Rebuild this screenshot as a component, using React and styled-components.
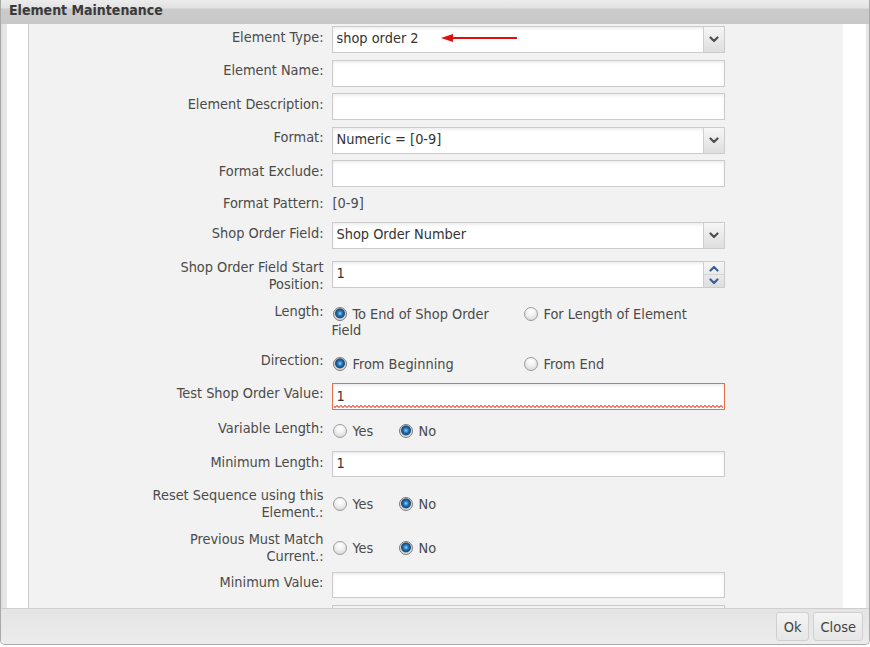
import React from "react";
import styled, { createGlobalStyle, css } from "styled-components";

const Global = createGlobalStyle`
  html, body { margin: 0; padding: 0; background: #ffffff; }
  body { font-family: "DejaVu Sans Condensed", "DejaVu Sans", sans-serif; }
  * { box-sizing: border-box; }
`;

const Dialog = styled.div`
  width: 870px;
  height: 645px;
  display: flex;
  flex-direction: column;
  border: 1px solid #a9a9a9;
  border-top: none;
  border-radius: 0 0 5px 5px;
  background: #e6e6e6;
  overflow: hidden;
`;

const TitleBar = styled.div`
  height: 24px;
  flex: none;
  padding-left: 8px;
  background: linear-gradient(#ececec 0, #e2e2e2 8px, #cbcbcb 9px, #c8c8c8 100%);
  font-weight: bold;
  font-size: 14px;
  line-height: 20px;
  color: #3a3a3a;
`;

const Body = styled.div`
  flex: none;
  height: 584px;
  padding: 0 3px 0 6px;
  background: linear-gradient(90deg, #d8d8d8 0, #e6e6e6 2px);
`;

const Frame = styled.div`
  height: 100%;
  background: #ffffff;
  padding: 0 23px 0 21px;
`;

const ScrollArea = styled.div`
  height: 100%;
  background: #f2f2f2;
  border-left: 1px solid #cdcdcd;
  overflow: hidden;
`;

const Form = styled.div`
  width: 577px;
  margin: 0 auto;
  padding-top: 2px;
  color: #4a4a4a;
  font-size: 14.4px;
`;

const Row = styled.div`
  display: grid;
  grid-template-columns: 176px 393px;
  column-gap: 8px;
  height: ${(p) => p.$h}px;
`;

const Label = styled.div`
  text-align: right;
  line-height: 17px;
  padding-top: ${(p) => p.$pt || 0}px;
`;

const Field = styled.div`
  padding-top: ${(p) => p.$pt || 0}px;
`;

const InputWrap = styled.div`
  position: relative;
`;

const boxBase = css`
  width: 393px;
  height: ${(p) => p.$ht || 27}px;
  border: 1px solid #cbcbcb;
  background: #ffffff;
  box-shadow: inset 0 2px 3px rgba(0, 0, 0, 0.07);
  font-family: "DejaVu Sans Condensed", "DejaVu Sans", sans-serif;
  font-size: 14.4px;
  color: #333333;
`;

const TextInput = styled.input`
  ${boxBase};
  display: block;
  padding: 0 4px 2px;
  outline: none;
  border-color: ${(p) => (p.$error ? "#e2704f" : "#cbcbcb")};
`;

const Squiggle = styled.div`
  position: absolute;
  left: 2px;
  right: 2px;
  bottom: 2px;
  height: 3px;
  background:
    linear-gradient(135deg, transparent 40%, #e25a4a 40%, #e25a4a 60%, transparent 60%) 0 0 / 4px 3px repeat-x,
    linear-gradient(45deg, transparent 40%, #e25a4a 40%, #e25a4a 60%, transparent 60%) 2px 0 / 4px 3px repeat-x;
  opacity: 0.75;
`;

const SelectBox = styled.div`
  ${boxBase};
  display: flex;
  align-items: center;
  padding-left: 4px;
  position: relative;
`;

const SelectText = styled.span`
  flex: 1;
  line-height: 17px;
  padding-bottom: 2px;
`;

const SideButton = styled.div`
  width: 21px;
  align-self: stretch;
  border-left: 1px solid #cfcfcf;
  background: linear-gradient(#f6f6f6, #dedede);
  display: flex;
  flex-direction: column;
  align-items: center;
  justify-content: center;
`;

const SpinHalf = styled.div`
  flex: 1;
  width: 100%;
  display: flex;
  align-items: center;
  justify-content: center;
  border-top: ${(p) => (p.$bottom ? "1px solid #d4d4d4" : "none")};
`;

const PlainValue = styled.div`
  line-height: 17px;
  padding-left: 1px;
  color: #4a4a4a;
`;

const Options = styled.div`
  padding-top: ${(p) => p.$pt || 0}px;
  display: flex;
  align-items: flex-start;
  gap: ${(p) => p.$gap || 0}px;
`;

const Option = styled.div`
  width: ${(p) => p.$w}px;
  flex: none;
  line-height: 16px;
`;

const RadioDot = styled.span`
  display: inline-block;
  width: 14px;
  height: 14px;
  border-radius: 50%;
  margin: 0 6px 0 1px;
  vertical-align: -2px;
  border: 1px solid #9c9c9c;
  ${(p) =>
    p.$on
      ? css`
          border-color: #7a7a7a;
          background: radial-gradient(circle at 50% 45%, #9fd3f5 0, #2e86c8 2px, #125a98 3.5px, #2a4f78 4.5px, #d9d9d9 5.5px, #f4f4f4 100%);
        `
      : css`
          background: radial-gradient(circle at 50% 30%, #ffffff 0, #f2f2f2 40%, #cfcfcf 100%);
        `}
`;

const Arrow = styled.svg`
  position: absolute;
  left: 108px;
  top: 6px;
  overflow: visible;
`;

const Footer = styled.div`
  flex: 1;
  border-top: 1px solid #cfcfcf;
  background: linear-gradient(#e4e4e4, #ececec);
  display: flex;
  justify-content: flex-end;
  align-items: flex-start;
  padding: 3px 6px 0 0;
  gap: 4px;
`;

const Button = styled.button`
  height: 29px;
  padding: 0 ${(p) => p.$px}px;
  border: 1px solid #d0d0d0;
  border-radius: 3px;
  background: linear-gradient(#f4f4f4, #e6e6e6);
  font-family: "DejaVu Sans Condensed", "DejaVu Sans", sans-serif;
  font-size: 14.5px;
  color: #444444;
`;

const Chevron = ({ up, color = "#505050" }) => (
  <svg width="10" height="7" viewBox="0 0 10 7">
    <polyline
      points={up ? "1.5,5.5 5,2 8.5,5.5" : "1.5,1.5 5,5 8.5,1.5"}
      fill="none"
      stroke={color}
      strokeWidth="2.2"
      strokeLinecap="round"
      strokeLinejoin="round"
    />
  </svg>
);

const Select = ({ value, children }) => (
  <SelectBox>
    <SelectText>{value}</SelectText>
    <SideButton>
      <Chevron />
    </SideButton>
    {children}
  </SelectBox>
);

const Radio = ({ on, label, w }) => (
  <Option $w={w}>
    <RadioDot $on={on} />
    {label}
  </Option>
);

export default function App() {
  return (
    <>
      <Global />
      <Dialog>
        <TitleBar>Element Maintenance</TitleBar>
        <Body>
          <Frame>
            <ScrollArea>
              <Form>
                <Row $h={33.5}>
                  <Label $pt={2.5}>Element Type:</Label>
                  <Field>
                    <Select value="shop order 2">
                      <Arrow width="80" height="12" viewBox="0 0 80 12">
                        <line x1="6" y1="5" x2="76" y2="5" stroke="#e01010" strokeWidth="1.8" />
                        <polygon points="0,5 12,1 12,9" fill="#e01010" />
                      </Arrow>
                    </Select>
                  </Field>
                </Row>
                <Row $h={33.5}>
                  <Label $pt={2.5}>Element Name:</Label>
                  <Field>
                    <TextInput readOnly defaultValue="" />
                  </Field>
                </Row>
                <Row $h={33.5}>
                  <Label $pt={2.5}>Element Description:</Label>
                  <Field>
                    <TextInput readOnly defaultValue="" />
                  </Field>
                </Row>
                <Row $h={33.5}>
                  <Label $pt={2.5}>Format:</Label>
                  <Field>
                    <Select value="Numeric = [0-9]" />
                  </Field>
                </Row>
                <Row $h={33.5}>
                  <Label $pt={2.5}>Format Exclude:</Label>
                  <Field>
                    <TextInput readOnly defaultValue="" />
                  </Field>
                </Row>
                <Row $h={28.5}>
                  <Label $pt={1.5}>Format Pattern:</Label>
                  <Field $pt={1.5}>
                    <PlainValue>[0-9]</PlainValue>
                  </Field>
                </Row>
                <Row $h={36.5}>
                  <Label $pt={2.5}>Shop Order Field:</Label>
                  <Field>
                    <Select value="Shop Order Number" />
                  </Field>
                </Row>
                <Row $h={44}>
                  <Label>Shop Order Field Start Position:</Label>
                  <Field $pt={2.5}>
                    <SelectBox>
                      <SelectText>1</SelectText>
                      <SideButton>
                        <SpinHalf>
                          <Chevron up color="#3b5f9c" />
                        </SpinHalf>
                        <SpinHalf $bottom>
                          <Chevron color="#3b5f9c" />
                        </SpinHalf>
                      </SideButton>
                    </SelectBox>
                  </Field>
                </Row>
                <Row $h={49}>
                  <Label>Length:</Label>
                  <Options $pt={3.5} $gap={26}>
                    <Radio on w={165} label="To End of Shop Order Field" />
                    <Radio w={190} label="For Length of Element" />
                  </Options>
                </Row>
                <Row $h={31.5}>
                  <Label>Direction:</Label>
                  <Options $pt={4} $gap={26}>
                    <Radio on w={165} label="From Beginning" />
                    <Radio w={190} label="From End" />
                  </Options>
                </Row>
                <Row $h={36.5}>
                  <Label $pt={2}>Test Shop Order Value:</Label>
                  <Field>
                    <InputWrap>
                      <TextInput $error readOnly defaultValue="1" />
                      <Squiggle />
                    </InputWrap>
                  </Field>
                </Row>
                <Row $h={31.5}>
                  <Label>Variable Length:</Label>
                  <Options $pt={3.5}>
                    <Radio w={66} label="Yes" />
                    <Radio on w={60} label="No" />
                  </Options>
                </Row>
                <Row $h={35.5}>
                  <Label $pt={2.5}>Minimum Length:</Label>
                  <Field>
                    <TextInput $ht={26} readOnly defaultValue="1" />
                  </Field>
                </Row>
                <Row $h={44}>
                  <Label>Reset Sequence using this Element.:</Label>
                  <Options $pt={9}>
                    <Radio w={66} label="Yes" />
                    <Radio on w={60} label="No" />
                  </Options>
                </Row>
                <Row $h={41.5}>
                  <Label>Previous Must Match Current.:</Label>
                  <Options $pt={9}>
                    <Radio w={66} label="Yes" />
                    <Radio on w={60} label="No" />
                  </Options>
                </Row>
                <Row $h={33}>
                  <Label $pt={2}>Minimum Value:</Label>
                  <Field>
                    <TextInput $ht={26} readOnly defaultValue="" />
                  </Field>
                </Row>
                <Row $h={33}>
                  <Label />
                  <Field>
                    <TextInput $ht={26} readOnly defaultValue="" />
                  </Field>
                </Row>
              </Form>
            </ScrollArea>
          </Frame>
        </Body>
        <Footer>
          <Button $px={7}>Ok</Button>
          <Button $px={6}>Close</Button>
        </Footer>
      </Dialog>
    </>
  );
}
